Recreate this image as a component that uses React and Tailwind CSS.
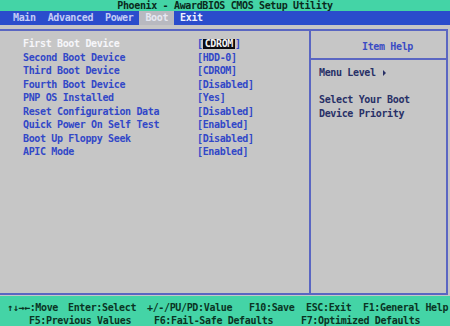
const rows = [
  { label: 'First Boot Device', value: 'CDROM', active: true },
  { label: 'Second Boot Device', value: 'HDD-0' },
  { label: 'Third Boot Device', value: 'CDROM' },
  { label: 'Fourth Boot Device', value: 'Disabled' },
  { label: 'PNP OS Installed', value: 'Yes' },
  { label: 'Reset Configuration Data', value: 'Disabled' },
  { label: 'Quick Power On Self Test', value: 'Enabled' },
  { label: 'Boot Up Floppy Seek', value: 'Disabled' },
  { label: 'APIC Mode', value: 'Enabled' },
];

const tabs = ['Main', 'Advanced', 'Power', 'Boot', 'Exit'];

export default function App() {
  return (
    <div className="w-[450px] h-[326px] flex flex-col bg-[#c6c6c6] font-['DejaVu_Sans_Mono','Liberation_Mono',monospace] font-bold text-[10px] tracking-[-0.35px] overflow-hidden">
      {/* title */}
      <div className="h-[11px] bg-[#44d4a6] text-[#0a2a1c] text-center leading-[11px]">
        Phoenix - AwardBIOS CMOS Setup Utility
      </div>

      {/* menu bar */}
      <div className="h-[14px] bg-[#2a4ccc] flex pl-[7px] leading-[14px]">
        {tabs.map((t) => (
          <div
            key={t}
            className={
              t === 'Boot'
                ? 'px-[6px] bg-[#b8b9c0] text-[#e6e8f2]'
                : t === 'Exit'
                ? 'px-[6px] text-[#eef0ff]'
                : 'px-[6px] text-[#c4ccf6]'
            }
          >
            {t}
          </div>
        ))}
      </div>

      <div className="h-[4px]" />

      {/* main panel */}
      <div className="h-[266px] mr-[2px] flex border-t-2 border-r-2 border-b-2 border-[#5a66c2]">
        <div className="w-[309px] pl-[23px] pt-[6px]">
          <div className="grid grid-cols-[174px_1fr] leading-[13.5px]">
            {rows.map((r) => (
              <div key={r.label} className="contents">
                <div className={r.active ? 'text-[#f6f6fa]' : 'text-[#3248c8]'}>{r.label}</div>
                <div className="text-[#3248c8]">
                  [
                  {r.active ? (
                    <span className="inline-block bg-[#0c0c10] text-[#f4f4f4] px-[2px] leading-[10px]">{r.value}</span>
                  ) : (
                    r.value
                  )}
                  ]
                </div>
              </div>
            ))}
          </div>
        </div>

        <div className="flex-1 flex flex-col border-l-2 border-[#5a66c2]">
          <div className="h-[29px] pt-[9px] pl-[51px] border-b-2 border-[#5a66c2] text-[#3a4cc4] leading-[13.5px]">
            Item Help
          </div>
          <div className="pt-[6px] pl-[8px] leading-[13.5px] text-[#283066]">
            <div className="flex items-center">
              Menu Level
              <span className="ml-[7px] w-0 h-0 border-y-[3px] border-y-transparent border-l-[3px] border-l-[#283066]" />
            </div>
            <div className="h-[13.5px]" />
            <div>Select Your Boot</div>
            <div>Device Priority</div>
          </div>
        </div>
      </div>

      <div className="h-[1px]" />

      {/* footer */}
      <div className="h-[30px] bg-[#44d4a6] text-[#0a3424] pt-[5px] leading-[13px]">
        <div className="flex pl-[7px]">
          <span className="w-[61px]">↑↓→←:Move</span>
          <span className="w-[79px]">Enter:Select</span>
          <span className="w-[102px]">+/-/PU/PD:Value</span>
          <span className="w-[57px]">F10:Save</span>
          <span className="w-[57px]">ESC:Exit</span>
          <span>F1:General Help</span>
        </div>
        <div className="flex pl-[29px]">
          <span className="w-[125px]">F5:Previous Values</span>
          <span className="w-[147px]">F6:Fail-Safe Defaults</span>
          <span>F7:Optimized Defaults</span>
        </div>
      </div>
    </div>
  );
}
